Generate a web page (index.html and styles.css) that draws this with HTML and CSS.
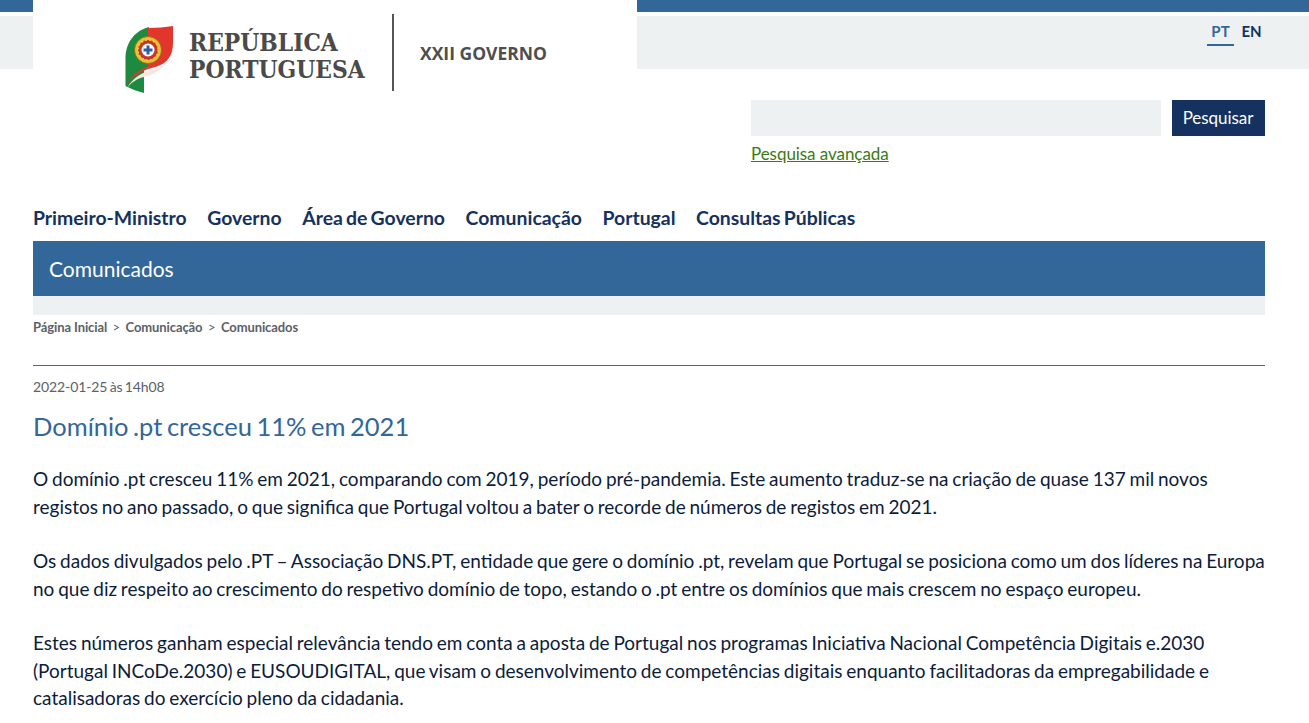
FILE: index.html
```html
<!DOCTYPE html>
<html lang="pt">
<head>
<meta charset="utf-8">
<title>Domínio .pt cresceu 11% em 2021</title>
<link rel="stylesheet" href="styles.css">
</head>
<body>
<header class="header">
  <div class="top-stripe"></div>
  <div class="lang-bar">
    <a class="lang lang-active">PT</a>
    <a class="lang">EN</a>
  </div>
  <div class="logo-box">
    <svg class="logo-mark" viewBox="0 0 50 68" width="50" height="68">
      <path d="M24 1 C12 4 1 14 .5 32 L.5 60 C6 63 12 65 19 67 L19 44 L24 40 Z" fill="#1d8a41"/>
      <path d="M2 62 C8 52 15 47 27 44 L38 41 C32 47 26 49 19 51 C11 53 6 57 2 62 Z" fill="#f6e6df"/>
      <path d="M23 2 C32 2 41 1 48 0 L48 17 C48 30 42 37 32 40.500 C20 43.500 8 48 2 59 C7 47 16 43 23 41 Z" fill="#e2352b"/>
      <circle cx="23" cy="24" r="13.500" fill="#e9c12f" stroke="#8a6a1a" stroke-width=".8"/>
      <circle cx="23" cy="24" r="10" fill="#c9342b"/>
      <circle cx="23" cy="24" r="10" fill="none" stroke="#f3d86a" stroke-width="1.200" stroke-dasharray="1.500 2.500"/>
      <circle cx="23" cy="24" r="6.500" fill="#fff"/>
      <rect x="21.500" y="19.500" width="3" height="9" fill="#2a5fa8"/>
      <rect x="18.500" y="22.500" width="9" height="3" fill="#2a5fa8"/>
    </svg>
    <div class="logo-name"><span>REPÚBLICA</span><span>PORTUGUESA</span></div>
    <div class="logo-rule"></div>
    <div class="logo-gov">XXII GOVERNO</div>
  </div>
</header>

<div class="page">
  <form class="search">
    <div class="search-row">
      <div class="search-input"></div>
      <button class="search-btn" type="button">Pesquisar</button>
    </div>
    <a class="search-link">Pesquisa avançada</a>
  </form>

  <nav class="nav">
    <a>Primeiro-Ministro</a>
    <a>Governo</a>
    <a>Área de Governo</a>
    <a>Comunicação</a>
    <a>Portugal</a>
    <a>Consultas Públicas</a>
  </nav>

  <div class="banner">Comunicados</div>
  <div class="subbanner"></div>

  <div class="crumbs">
    <a>Página Inicial</a><span class="sep">&gt;</span><a>Comunicação</a><span class="sep">&gt;</span><a>Comunicados</a>
  </div>

  <main class="article">
    <div class="date">2022-01-25 às 14h08</div>
    <h1 class="title">Domínio .pt cresceu 11% em 2021</h1>
    <p>O domínio .pt cresceu 11% em 2021, comparando com 2019, período pré-pandemia. Este aumento traduz-se na criação de quase 137 mil novos registos no ano passado, o que significa que Portugal voltou a bater o recorde de números de registos em 2021.</p>
    <p>Os dados divulgados pelo .PT – Associação DNS.PT, entidade que gere o domínio .pt, revelam que Portugal se posiciona como um dos líderes na Europa no que diz respeito ao crescimento do respetivo domínio de topo, estando o .pt entre os domínios que mais crescem no espaço europeu.</p>
    <p>Estes números ganham especial relevância tendo em conta a aposta de Portugal nos programas Iniciativa Nacional Competência Digitais e.2030 (Portugal INCoDe.2030) e EUSOUDIGITAL, que visam o desenvolvimento de competências digitais enquanto facilitadoras da empregabilidade e catalisadoras do exercício pleno da cidadania.</p>
  </main>
</div>
</body>
</html>
```

FILE: styles.css
```css
* { box-sizing: border-box; }
html, body { margin: 0; padding: 0; }
html { overflow: hidden; }
body {
  background: #fff;
  color: #0c1c3c;
  font-family: Lato, "Liberation Sans", sans-serif;
  height: 723px;
  overflow: hidden;
}
.header { position: relative; }
.top-stripe { height: 12px; background: #336699; margin-bottom: 4px; }
.lang-bar {
  height: 53px;
  background: #eef1f2;
  display: flex;
  justify-content: flex-end;
  padding: 3px 44px 0 0;
  gap: 4px;
}
.lang {
  width: 27px;
  height: 27px;
  font-size: 15px;
  font-weight: 700;
  line-height: 24px;
  text-align: center;
  color: #14315f;
}
.lang-active { color: #336699; border-bottom: 2px solid #336699; }
.logo-box {
  position: absolute;
  left: 33px;
  top: 0;
  width: 604px;
  height: 100px;
  background: #fff;
  display: flex;
  align-items: flex-start;
}
.logo-mark { margin: 26px 0 0 92px; flex: none; }
.logo-name {
  margin: 28.500px 0 0 14px;
  width: 203px;
  display: flex;
  flex-direction: column;
  font-family: "DejaVu Serif", serif;
  font-stretch: condensed;
  font-weight: 700;
  font-size: 24.300px;
  line-height: 27px;
  color: #4a4a4a;
}
.logo-rule { width: 2px; height: 77px; margin-top: 14px; background: #555; flex: none; }
.logo-gov {
  margin: 41px 0 0 26px;
  font-family: "Open Sans", sans-serif;
  font-weight: 700;
  font-size: 17.500px;
  line-height: 24px;
  color: #4e4e4e;
}
.page { padding: 0 44px 0 33px; }
.search {
  margin-top: 31px;
  margin-left: 718px;
  height: 100px;
}
.search-row { display: flex; gap: 11px; height: 36px; }
.search-input { width: 410px; background: #eef1f2; }
.search-btn {
  width: 93px;
  border: 0;
  padding: 0 1px 0 0;
  background: #14315f;
  color: #fff;
  font: 400 17px/36px Lato, sans-serif;
  letter-spacing: -0.05px;
}
.search-link {
  display: block;
  margin-top: 7px;
  font-size: 17px;
  line-height: 22px;
  letter-spacing: -0.06px;
  color: #3b7a13;
  text-decoration: underline;
}
.nav {
  display: flex;
  gap: 20.600px;
  height: 41px;
  padding-top: 6px;
  font-size: 19.400px;
  font-weight: 700;
  line-height: 24px;
  word-spacing: -1.500px;
  color: #14315f;
}
.banner {
  height: 55px;
  background: #336699;
  color: #fff;
  font-size: 21px;
  line-height: 55px;
  padding-left: 16px;
}
.subbanner { height: 19px; background: #eef1f2; }
.crumbs {
  display: flex;
  height: 51px;
  border-bottom: 1px solid #4a6a8a;
  padding-top: 4px;
  font-size: 13px;
  font-weight: 700;
  line-height: 16px;
  color: #5b6168;
  letter-spacing: -0.1px;
}
.sep { margin: 0 5.500px; font-weight: 400; }
.date {
  margin-top: 12px;
  font-size: 14px;
  line-height: 18px;
  word-spacing: -1.200px;
  letter-spacing: -0.1px;
  color: #5b6168;
}
.title {
  margin: 14px 0 23px;
  font-size: 25.500px;
  font-weight: 400;
  line-height: 32px;
  word-spacing: -2px;
  color: #336699;
}
.article p {
  margin: 0 0 27px;
  font-size: 19px;
  line-height: 27.500px;
  word-spacing: -1.050px;
  color: #0c1c3c;
}
```
